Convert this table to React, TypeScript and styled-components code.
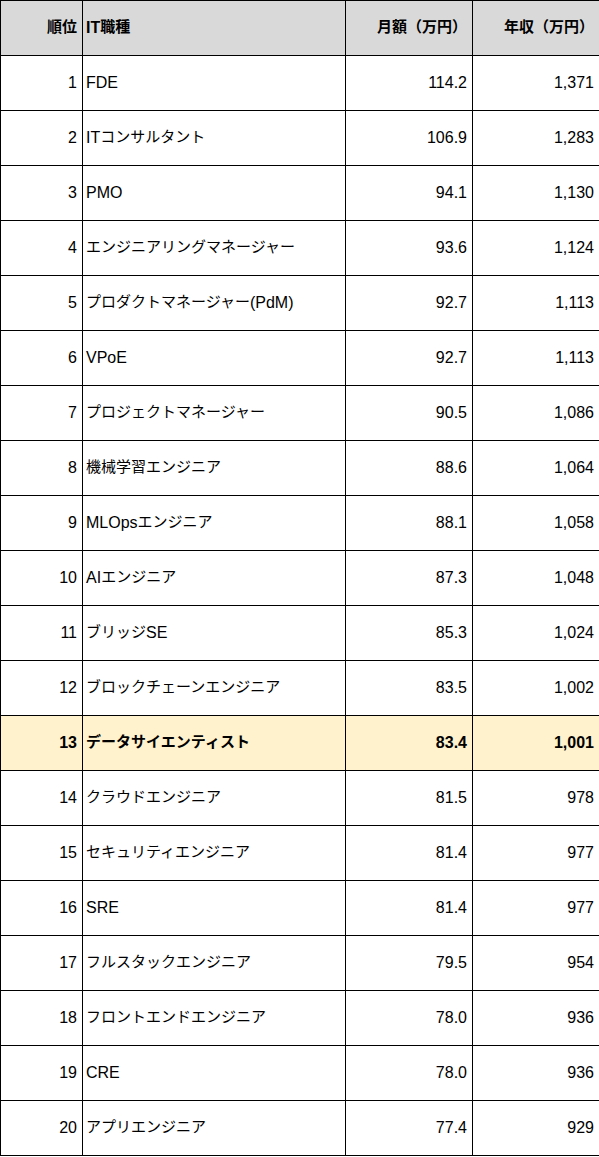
import styled, { createGlobalStyle } from "styled-components"

const GlobalStyle = createGlobalStyle`
    body {
        margin: 0;
        background: #ffffff;
        color: #000000;
        font-family: "Liberation Sans", Arial, "Noto Sans CJK JP", sans-serif;
    }
`

const Table = styled.table`
    width: 599px;
    table-layout: fixed;
    border-collapse: collapse;
    font-size: 16px;
    line-height: 20px;
    color: #000000;
`
const HeadCell = styled.th<{ $align: "left" | "right" }>`
    height: 54px;
    padding: 0 5px 0 3px;
    border: 1px solid #000000;
    background-color: #d9d9d9;
    color: #000000;
    font-weight: 700;
    text-align: ${props => props.$align};
    vertical-align: middle;
    white-space: nowrap;
`
const Row = styled.tr<{ $highlight: boolean }>`
    background-color: ${props => props.$highlight ? "#fff2cc" : "#ffffff"};
    font-weight: ${props => props.$highlight ? 700 : 400};
`
const Cell = styled.td<{ $align: "left" | "right" }>`
    height: 54px;
    padding: 0 5px 0 3px;
    border: 1px solid #000000;
    text-align: ${props => props.$align};
    vertical-align: middle;
    white-space: nowrap;
    overflow: hidden;
`
// 和文は欧文より少し小さく組まれている
const Kana = styled.span`
    font-family: "Noto Sans CJK JP", sans-serif;
    font-size: 15px;
    line-height: 1;
    color: #000000;
    vertical-align: 1px;
`

const CJK = /([\u3000-\u30ff\u4e00-\u9fff\uff00-\uffef]+)/

const Text = ({ value }: { value: string }) => {
    return (
        <>
        {value.split(CJK).filter(part => part !== "").map((part, index) =>
            CJK.test(part)
                ? <Kana key={index}>{part}</Kana>
                : <span key={index}>{part}</span>
        )}
        </>
    )
}

interface IJob {
    name: string;
    monthly: string;
    annual: string;
}

const jobs: IJob[] = [
    { name: "FDE", monthly: "114.2", annual: "1,371" },
    { name: "ITコンサルタント", monthly: "106.9", annual: "1,283" },
    { name: "PMO", monthly: "94.1", annual: "1,130" },
    { name: "エンジニアリングマネージャー", monthly: "93.6", annual: "1,124" },
    { name: "プロダクトマネージャー(PdM)", monthly: "92.7", annual: "1,113" },
    { name: "VPoE", monthly: "92.7", annual: "1,113" },
    { name: "プロジェクトマネージャー", monthly: "90.5", annual: "1,086" },
    { name: "機械学習エンジニア", monthly: "88.6", annual: "1,064" },
    { name: "MLOpsエンジニア", monthly: "88.1", annual: "1,058" },
    { name: "AIエンジニア", monthly: "87.3", annual: "1,048" },
    { name: "ブリッジSE", monthly: "85.3", annual: "1,024" },
    { name: "ブロックチェーンエンジニア", monthly: "83.5", annual: "1,002" },
    { name: "データサイエンティスト", monthly: "83.4", annual: "1,001" },
    { name: "クラウドエンジニア", monthly: "81.5", annual: "978" },
    { name: "セキュリティエンジニア", monthly: "81.4", annual: "977" },
    { name: "SRE", monthly: "81.4", annual: "977" },
    { name: "フルスタックエンジニア", monthly: "79.5", annual: "954" },
    { name: "フロントエンドエンジニア", monthly: "78.0", annual: "936" },
    { name: "CRE", monthly: "78.0", annual: "936" },
    { name: "アプリエンジニア", monthly: "77.4", annual: "929" },
]

// 13位（データサイエンティスト）を強調
const HIGHLIGHT_RANK = 13

function App() {
    return (
        <>
        <GlobalStyle />
        <Table>
            <colgroup>
                <col style={{ width: "82px" }} />
                <col style={{ width: "263px" }} />
                <col style={{ width: "127px" }} />
                <col style={{ width: "127px" }} />
            </colgroup>
            <thead>
                <tr>
                    <HeadCell $align="right"><Text value="順位" /></HeadCell>
                    <HeadCell $align="left"><Text value="IT職種" /></HeadCell>
                    <HeadCell $align="right"><Text value="月額（万円）" /></HeadCell>
                    <HeadCell $align="right"><Text value="年収（万円）" /></HeadCell>
                </tr>
            </thead>
            <tbody>
                {jobs.map((job, index) =>
                    <Row key={job.name} $highlight={index + 1 === HIGHLIGHT_RANK}>
                        <Cell $align="right">{index + 1}</Cell>
                        <Cell $align="left"><Text value={job.name} /></Cell>
                        <Cell $align="right">{job.monthly}</Cell>
                        <Cell $align="right">{job.annual}</Cell>
                    </Row>
                )}
            </tbody>
        </Table>
        </>
    )
}

export default App;
